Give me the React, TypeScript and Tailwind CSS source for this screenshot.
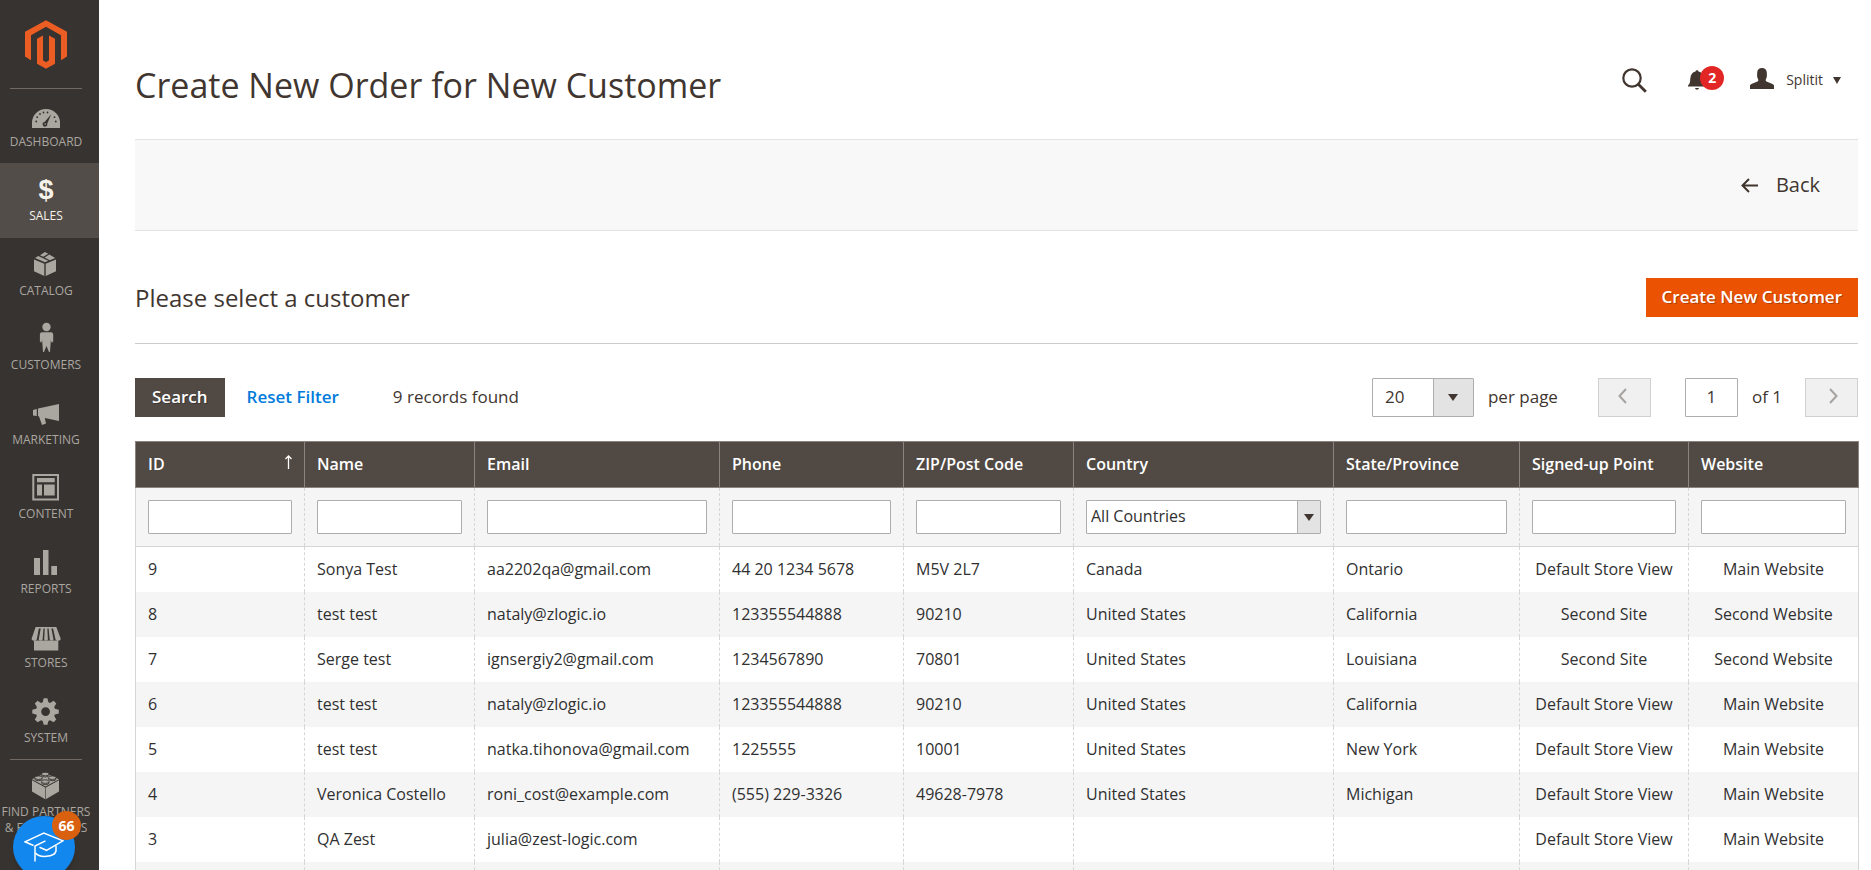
import { useState, type ReactNode } from "react";

const DashboardIcon = () => (
  <svg viewBox="0 0 30 30" className="size-[30px]" fill="currentColor">
    <path d="M1 27v-5.500A14 13.500 0 0 1 29 21.500V27z" />
    <g className="fill-[#373330]">
      <path d="M20.200 13.200l-4 9.600a2.300 2.300 0 1 1-2.600-1.700z" />
      <circle cx="5.200" cy="20.500" r="0.900" />
      <circle cx="6.200" cy="16.200" r="0.900" />
      <circle cx="9" cy="13" r="0.900" />
      <circle cx="12.500" cy="11.500" r="0.900" />
      <circle cx="16.500" cy="11.500" r="0.900" />
      <circle cx="23.500" cy="16.200" r="0.900" />
      <circle cx="24.800" cy="20.500" r="0.900" />
    </g>
    <circle cx="14.200" cy="23" r="0.800" />
  </svg>
);

const CatalogIcon = () => (
  <svg viewBox="0 0 30 30" className="size-[30px]" fill="currentColor">
    <path d="M3 9.600l10.300 4.200v12.300L3 21.300zM25 9.600l-10.300 4.200v12.300L25 21.300z" />
    <path d="M4 8l3.300-1.900 10 4.600L14 12.300zM9 5.300L13.900 2l3.300 1.700-4.900 3.100zM18.300 4.400L24.200 8l-5.400 2.200-5.200-2.700z" />
  </svg>
);

const CustomersIcon = () => (
  <svg viewBox="0 0 30 30" className="size-[30px] overflow-visible" fill="currentColor">
    <circle cx="15.500" cy="3" r="4.200" />
    <path d="M11 8.300h9c1.500 0 2.200 1 2.200 2.500v6.700l-1.600 1.200-.700-3-.9 12.300h-1l-2.500-6-2.500 6h-1l-.900-12.300-.700 3-1.500-1.200v-6.700c0-1.500.7-2.500 2.100-2.500z" />
  </svg>
);

const MarketingIcon = () => (
  <svg viewBox="0 0 30 30" className="size-[30px]" fill="currentColor">
    <path d="M2 11l3.800-1v7L2 16.500zM7 9.500L28 5v17l-14.200-3 1.200 5.500-4 1.500-3-8.500-1-.500z" />
  </svg>
);

const ContentIcon = () => (
  <svg viewBox="0 0 30 30" className="size-[30px]" fill="currentColor">
    <path fillRule="evenodd" d="M1.300 1h26.700v26.500H1.300zM3.300 3v22.500H26V3z" />
    <path d="M6 5h17.700v4.200H6zM6 11.500h5v11H6zM13 11.500h10.700v11H13z" />
  </svg>
);

const ReportsIcon = () => (
  <svg viewBox="0 0 30 30" className="size-[30px]" fill="currentColor">
    <path d="M3 10h6v17H3zM12 2h5.500v25H12zM20.300 18H26v9h-5.700z" />
  </svg>
);

const StoresIcon = () => (
  <svg viewBox="0 0 30 30" className="size-[30px]" fill="currentColor">
    <path d="M4.500 5h21v1.500h-21z" />
    <path d="M4.300 6h3.600L5.800 17.500c-1.500 2-4.600 1.500-5.300-.5zM9.800 6h2.700l-.900 11.500c-.8 1.500-3.300 1.500-3.900 0zM13.800 6h2.500l.600 11.500c-.8 1.500-3 1.500-3.700 0zM17.600 6h2.700l2.200 11.500c-.7 1.500-3.100 1.500-3.800 0zM22 6h3.700l4.100 11c-.8 2-3.800 2.500-5.300.5z" />
    <path d="M3 18.500h24.300V28.500H3z" />
  </svg>
);

const SystemIcon = () => (
  <svg viewBox="0 0 30 30" className="size-[30px]" fill="currentColor">
    <path
      fillRule="evenodd"
      d="M11.700 5.200L12.700 1.300h3.700l1 3.900 1.700.7 3.500-2.100 2.700 2.700-2.100 3.500.700 1.700 3.900 1v3.700l-3.900 1-.7 1.700 2.100 3.500-2.700 2.700-3.500-2.100-1.700.7-1 3.900h-3.700l-1-3.900-1.700-.7-3.500 2.100-2.700-2.700 2.100-3.500-.7-1.700-3.900-1v-3.700l3.900-1 .7-1.700-2.100-3.500 2.700-2.700 3.500 2.100zM14.600 10.200a4.400 4.400 0 1 0 0 8.800 4.400 4.400 0 0 0 0-8.800z"
    />
  </svg>
);

const PartnersIcon = () => (
  <svg viewBox="0 0 30 30" className="size-[30px]" fill="currentColor">
    <path d="M1 9.200l13.200 7.200v11.800L1 20.500zM28 9.200l-13.200 7.200v11.800L28 20.500z" />
    <path d="M14.500 2L28 8.200 14.500 15.600 1 8.200z" />
    <g className="stroke-[#373330]" strokeWidth="0.900">
      <ellipse cx="14.300" cy="4.200" rx="3.800" ry="1.800" />
      <ellipse cx="14.300" cy="3" rx="3.800" ry="1.800" />
      <ellipse cx="7.500" cy="7.900" rx="3.800" ry="1.800" />
      <ellipse cx="7.500" cy="6.700" rx="3.800" ry="1.800" />
      <ellipse cx="21.300" cy="7.900" rx="3.800" ry="1.800" />
      <ellipse cx="21.300" cy="6.700" rx="3.800" ry="1.800" />
      <ellipse cx="14.300" cy="11.800" rx="3.800" ry="1.800" />
      <ellipse cx="14.300" cy="10.600" rx="3.800" ry="1.800" />
    </g>
  </svg>
);

const navItems: { label: string; icon: ReactNode; active?: boolean }[] = [
  { label: "Dashboard", icon: <DashboardIcon /> },
  {
    label: "Sales",
    icon: <span className="font-['Liberation_Sans'] text-[27px] leading-[30px] font-bold">$</span>,
    active: true,
  },
  { label: "Catalog", icon: <CatalogIcon /> },
  { label: "Customers", icon: <CustomersIcon /> },
  { label: "Marketing", icon: <MarketingIcon /> },
  { label: "Content", icon: <ContentIcon /> },
  { label: "Reports", icon: <ReportsIcon /> },
  { label: "Stores", icon: <StoresIcon /> },
  { label: "System", icon: <SystemIcon /> },
];

const columns = [
  { key: "id", label: "ID", width: "w-[169px]" },
  { key: "name", label: "Name", width: "w-[170px]" },
  { key: "email", label: "Email", width: "w-[245px]" },
  { key: "phone", label: "Phone", width: "w-[184px]" },
  { key: "zip", label: "ZIP/Post Code", width: "w-[170px]" },
  { key: "country", label: "Country", width: "w-[260px]" },
  { key: "state", label: "State/Province", width: "w-[186px]" },
  { key: "store", label: "Signed-up Point", width: "w-[169px]", center: true },
  { key: "website", label: "Website", width: "w-[170px]", center: true },
];

const customers = [
  ["9", "Sonya Test", "aa2202qa@gmail.com", "44 20 1234 5678", "M5V 2L7", "Canada", "Ontario", "Default Store View", "Main Website"],
  ["8", "test test", "nataly@zlogic.io", "123355544888", "90210", "United States", "California", "Second Site", "Second Website"],
  ["7", "Serge test", "ignsergiy2@gmail.com", "1234567890", "70801", "United States", "Louisiana", "Second Site", "Second Website"],
  ["6", "test test", "nataly@zlogic.io", "123355544888", "90210", "United States", "California", "Default Store View", "Main Website"],
  ["5", "test test", "natka.tihonova@gmail.com", "1225555", "10001", "United States", "New York", "Default Store View", "Main Website"],
  ["4", "Veronica Costello", "roni_cost@example.com", "(555) 229-3326", "49628-7978", "United States", "Michigan", "Default Store View", "Main Website"],
  ["3", "QA Zest", "julia@zest-logic.com", "", "", "", "", "Default Store View", "Main Website"],
  ["", "", "", "", "", "", "", "", ""],
];

const Caret = () => (
  <svg viewBox="0 0 10 7" className="h-[7px] w-[10px] fill-[#41362f]">
    <path d="M0 0h10L5 7z" />
  </svg>
);

function Sidebar() {
  return (
    <aside className="relative w-[99px] shrink-0 bg-[#373330] text-xs leading-4 text-[#aaa6a0] uppercase">
      <a href="#" aria-label="Magento" className="flex h-[88px] items-center justify-center pr-[7px]">
        <svg viewBox="75 59 126 146" className="h-[49px] w-[42px] fill-[#eb5d22]">
          <path d="M138 59l63 35v74l-18 11v-75l-45-25-45 25v75l-18-11V94z" />
          <path d="M111 115l18-10v74l9 6 9-6v-74l18 10v75l-27 15-27-15z" />
        </svg>
      </a>
      <hr className="ml-[10px] w-[72px] border-[#736963]" />
      <nav>
        <div className="grid h-[670px] auto-rows-fr">
          {navItems.map((item) => (
            <a
              key={item.label}
              href="#"
              className={`flex flex-col items-center pt-3 pr-[7px] ${
                item.active ? "bg-[#524d49] text-[#f7f3eb]" : ""
              }`}
            >
              {item.icon}
              <span className="mt-[3px]">{item.label}</span>
            </a>
          ))}
        </div>
        <hr className="ml-[10px] w-[72px] border-[#736963]" />
        <a href="#" className="flex flex-col items-center pt-[11px] pr-[7px] text-center">
          <PartnersIcon />
          <span className="mt-[3px] whitespace-nowrap">
            Find Partners
            <br />
            &amp; Extensions
          </span>
        </a>
      </nav>

      {/* Guidance bubble */}
      <button
        aria-label="Guides"
        className="fixed -bottom-2 left-[13px] flex size-[62px] items-center justify-center rounded-full bg-[#1287ee] shadow-md"
      >
        <svg viewBox="0 0 40 30" className="h-[30px] w-10" fill="none" stroke="#fff" strokeWidth="1.500">
          <path d="M9.500 13.500L1 9.800 19.800 1 39 8.800l-16.500 9.500-7-3" />
          <path d="M21.500 8.800L11 14v15.500" />
          <path d="M32 13.500v5.500c-1.500 6.500-17 7-20.500 2" />
        </svg>
        <span className="absolute -top-[5px] -right-[6px] flex size-[29px] items-center justify-center rounded-full bg-[#d9600f] text-sm font-bold text-white">
          66
        </span>
      </button>
    </aside>
  );
}

function PageHeader() {
  return (
    <header className="flex h-[139px] items-start justify-between">
      <h1 className="pt-[61px] text-[34px] leading-[48px] text-[#41362f]">
        Create New Order for New Customer
      </h1>
      <div className="flex h-[160px] items-center pr-[17px] text-[#41362f]">
        <button aria-label="Search">
          <svg viewBox="0 0 25 25" className="size-[25px]" fill="none" stroke="currentColor">
            <circle cx="10" cy="10" r="8.700" strokeWidth="2.200" />
            <path d="M16.300 16.300l7.500 7.500" strokeWidth="2.800" />
          </svg>
        </button>
        <button aria-label="Notifications" className="relative ml-[41px] w-9">
          <svg viewBox="0 0 18 20" className="h-5 w-[18px]" fill="currentColor">
            <path d="M0 16.500v-1c2-2 2-3 2.300-7C2.600 4.500 4.500 2.200 7.500 1.500 7.700-.3 10.300-.3 10.500 1.500c3 .7 4.900 3 5.200 7 .3 4 .3 5 2.300 7v1zM7 18h4c-.5 2.300-3.500 2.300-4 0z" />
          </svg>
          <span className="absolute -top-1 right-0 flex size-6 items-center justify-center rounded-full bg-[#e22626] text-sm font-bold text-white">
            2
          </span>
        </button>
        <button className="ml-[26px] flex items-center text-sm">
          <svg viewBox="0 0 24 21" className="mr-3 mb-[3px] h-[21px] w-6" fill="currentColor">
            <path d="M0 21v-3.500c0-1.500 4.500-2.500 7.500-4 1-.5 1-1.500.5-2.500C7 9.500 7 8 7.200 4.500 7.400 1.500 9 0 12 0s4.600 1.500 4.800 4.500C17 8 17 9.500 16 11c-.5 1-.5 2 .5 2.500 3 1.500 7.500 2.500 7.500 4V21z" />
          </svg>
          Splitit
          <svg viewBox="0 0 8 7" className="ml-[10px] h-[7px] w-2" fill="currentColor">
            <path d="M0 0h8L4 7z" />
          </svg>
        </button>
      </div>
    </header>
  );
}

function Toolbar() {
  const [page, setPage] = useState("1");

  return (
    <div className="mt-[34px] flex h-[39px] items-center text-[17px]">
      <button className="h-full bg-[#514943] px-[17px] pb-[2px] font-semibold text-white [text-shadow:1px_1px_0_rgba(0,0,0,0.3)]">
        Search
      </button>
      <button className="ml-[22px] pb-[2px] font-semibold text-[#007bdb]">Reset Filter</button>
      <span className="ml-[54px] pb-[2px]">9 records found</span>

      <div className="ml-auto flex h-full items-center">
        <div className="relative h-full w-[102px]">
          <select
            id="per-page"
            className="h-full w-full appearance-none rounded-[1px] border border-[#adadad] bg-white pb-[2px] pl-3"
          >
            <option>20</option>
          </select>
          <span className="pointer-events-none absolute inset-y-px right-px flex w-10 items-center justify-center border-l border-[#adadad] bg-[#e3e3e3]">
            <Caret />
          </span>
        </div>
        <label htmlFor="per-page" className="ml-[14px] pb-[2px]">
          per page
        </label>
        <button
          aria-label="Previous page"
          disabled
          className="ml-10 flex h-full w-[53px] items-center justify-center border border-[#d1d1d1] bg-[#f0f0f0]"
        >
          <svg viewBox="0 0 9 16" className="mr-1 mb-1 h-4 w-[9px]" fill="none" stroke="#a6a39f" strokeWidth="2">
            <path d="M8 1L1.500 8 8 15" />
          </svg>
        </button>
        <input
          id="page"
          value={page}
          onChange={(e) => setPage(e.target.value)}
          className="ml-[34px] h-full w-[53px] rounded-[1px] border border-[#adadad] pb-[2px] text-center"
        />
        <label htmlFor="page" className="ml-[14px] pb-[2px]">
          of 1
        </label>
        <button
          aria-label="Next page"
          disabled
          className="ml-[23px] flex h-full w-[53px] items-center justify-center border border-[#d1d1d1] bg-[#f0f0f0]"
        >
          <svg viewBox="0 0 9 16" className="mb-1 ml-1 h-4 w-[9px]" fill="none" stroke="#a6a39f" strokeWidth="2">
            <path d="M1 1l6.500 7L1 15" />
          </svg>
        </button>
      </div>
    </div>
  );
}

function CustomerGrid() {
  return (
    <table className="mt-6 w-full table-fixed border-collapse text-base text-[#303030]">
      <thead>
        <tr className="h-[46px] bg-[#514943] text-left text-white">
          {columns.map((col) => (
            <th
              key={col.key}
              id={`col-${col.key}`}
              className={`border border-[#8a837f] px-3 pb-[2px] font-semibold ${col.width}`}
            >
              {col.key === "id" ? (
                <span className="flex items-center justify-between">
                  {col.label}
                  <svg viewBox="0 0 7 14" className="mb-1 h-[14px] w-[7px]" fill="none" stroke="currentColor" strokeWidth="1.300">
                    <path d="M3.500 14V1M.5 4l3-3 3 3" />
                  </svg>
                </span>
              ) : (
                col.label
              )}
            </th>
          ))}
        </tr>
        <tr className="h-[59px] border-x border-b border-[#d6d6d6] bg-[#f5f5f5]">
          {columns.map((col) => (
            <td key={col.key} className="border-l border-dashed border-[#d6d6d6] px-3 first:border-solid">
              {col.key === "country" ? (
                <div className="relative h-[34px]">
                  <select
                    aria-labelledby={`col-${col.key}`}
                    className="h-full w-full appearance-none rounded-[1px] border border-[#adadad] bg-white pb-[2px] pl-1"
                  >
                    <option>All Countries</option>
                  </select>
                  <span className="pointer-events-none absolute inset-y-px right-px flex w-[23px] items-center justify-center border-l border-[#adadad] bg-[#e3e3e3]">
                    <Caret />
                  </span>
                </div>
              ) : (
                <input
                  aria-labelledby={`col-${col.key}`}
                  className="block h-[34px] w-full rounded-[1px] border border-[#adadad] bg-white px-1"
                />
              )}
            </td>
          ))}
        </tr>
      </thead>
      <tbody className="border-x border-[#d6d6d6]">
        {customers.map((row, r) => (
          <tr key={r} className="h-[45px] even:bg-[#f5f5f5]">
            {row.map((cell, i) => (
              <td
                key={columns[i].key}
                className={`border-l border-dashed border-[#d6d6d6] px-3 first:border-solid ${
                  columns[i].center ? "text-center" : ""
                }`}
              >
                {cell}
              </td>
            ))}
          </tr>
        ))}
      </tbody>
    </table>
  );
}

export default function App() {
  return (
    <div className="flex h-screen overflow-hidden bg-white font-['Open_Sans',sans-serif] text-[#41362f]">
      <Sidebar />
      <main className="min-w-0 flex-1 pr-[13px] pl-9">
        <PageHeader />
        <div className="flex h-[92px] items-center justify-end border-y border-[#e3e3e3] bg-[#f8f8f8] pr-[38px]">
          <button className="flex items-center gap-[18px] text-xl font-medium">
            <svg viewBox="0 0 17 15" className="h-[15px] w-[17px]" fill="none" stroke="currentColor" strokeWidth="2">
              <path d="M17 7.500H1.500M8 1L1.500 7.500 8 14" />
            </svg>
            Back
          </button>
        </div>
        <div className="mt-[47px] flex h-[66px] items-start justify-between border-b border-[#cccccc]">
          <h2 className="text-2xl leading-10">Please select a customer</h2>
          <button className="h-[39px] bg-[#eb5202] px-4 pb-[2px] text-[17px] font-semibold text-white [text-shadow:1px_1px_0_rgba(0,0,0,0.25)]">
            Create New Customer
          </button>
        </div>
        <Toolbar />
        <CustomerGrid />
      </main>
    </div>
  );
}
